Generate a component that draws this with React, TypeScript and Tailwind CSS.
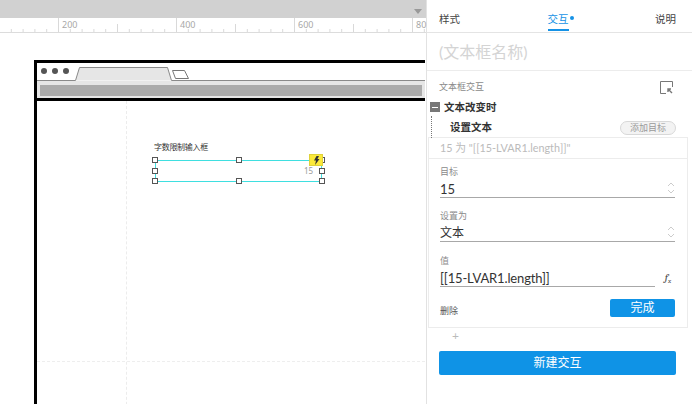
import React from "react";

const font = { fontFamily: '"Lato", "Noto Sans CJK SC", sans-serif' };

function Ruler() {
  return (
    <div className="relative h-[15px] border-b border-[#dcdcdc] bg-white">
      <svg className="absolute left-0 top-0" width="426" height="15">
        {Array.from({ length: 40 }, (_, i) => {
          const n = i - 5;
          const x = 58.5 + n * 11.8;
          const y1 = (n + 100) % 10 === 0 ? 0 : (n + 100) % 5 === 0 ? 6 : 11;
          return <line key={i} x1={x} x2={x} y1={y1} y2={14} stroke="#d9d9d9" />;
        })}
      </svg>
      {[
        [62, "200"],
        [180, "400"],
        [298, "600"],
        [416, "80"],
      ].map(([x, t]) => (
        <span key={t} className="absolute top-[0px] text-[9px] leading-[14px] text-[#a8a8a8]" style={{ left: x as number }}>
          {t}
        </span>
      ))}
    </div>
  );
}

function Handle({ x, y }: { x: number; y: number }) {
  return <div className="absolute h-[6px] w-[6px] border border-[#555] bg-white" style={{ left: x, top: y }} />;
}

function Canvas() {
  return (
    <div className="flex w-[426px] flex-col">
      <div className="relative h-[18px] bg-[#d1d1d1]">
        <div className="absolute left-[414px] top-[9px] h-0 w-0 border-x-[4px] border-t-[5px] border-x-transparent border-t-[#999]" />
      </div>
      <Ruler />
      <div className="relative flex-1 overflow-hidden bg-white">
        <div className="absolute left-[34px] top-[27px] h-[400px] w-[391px] border-l-[3px] border-t-[3px] border-black">
          <div className="relative h-[38px] border-b-[3px] border-black bg-white">
            <div className="flex gap-[5px] pl-[4px] pt-[5px]">
              <i className="block h-[6px] w-[6px] rounded-full bg-[#555]" />
              <i className="block h-[6px] w-[6px] rounded-full bg-[#555]" />
              <i className="block h-[6px] w-[6px] rounded-full bg-[#555]" />
            </div>
            <svg className="absolute left-0 top-0" width="388" height="22">
              <path d="M0 17.5H38.5L42.5 4.5H130.5L134.5 17.5H388" fill="#e6e6e6" stroke="#8a8a8a" />
              <path d="M135.5 7.5H147.5L151.5 15.5H138.5Z" fill="#fff" stroke="#777" />
            </svg>
            <div className="absolute inset-x-0 top-[18px] h-[17px] bg-[#e6e6e6] px-[3px] pt-[4px]">
              <div className="h-[11px] bg-[#ababab]" />
            </div>
          </div>
          <div className="absolute bottom-0 left-[89px] top-[38px] border-l border-dashed border-[#ececec]" />
          <div className="absolute left-0 right-0 top-[298px] border-t border-dashed border-[#eeeeee]" />
        </div>

        <div className="absolute left-[154px] top-[108px] text-[8px] leading-[12px] tracking-[-0.3px] text-[#333]" style={font}>字数限制输入框</div>
        <div className="absolute left-[155px] top-[127px] h-[22px] w-[167px] border border-[#3fdfe0]" />
        <Handle x={152} y={124} />
        <Handle x={236} y={124} />
        <Handle x={319} y={124} />
        <Handle x={152} y={135} />
        <Handle x={319} y={135} />
        <Handle x={152} y={145} />
        <Handle x={236} y={145} />
        <Handle x={319} y={145} />
        <span className="absolute left-[304px] top-[133px] text-[8px] leading-[10px] text-[#999]">15</span>
        <div className="absolute left-[309px] top-[121px] flex h-[12px] w-[14px] items-center justify-center border border-[#dfd23a] bg-[#fbe93a]">
          <svg width="7" height="9" viewBox="0 0 7 9"><path d="M3.5 0H6L4.5 3H6.5L2 9L3 4.5H1Z" fill="#333" /></svg>
        </div>
      </div>
    </div>
  );
}

function Field({ label, value, top, icon, size }: { label: string; value: string; top: string; icon?: boolean; size: string }) {
  return (
    <div className={top}>
      <div className="text-[9px] leading-[14px] text-[#8a8a8a]">{label}</div>
      <div className={`relative mt-[1px] flex h-[18px] items-center border-b border-[#a8a8a8] leading-[18px] text-[#333] ${size}`}>
        {value}
        {icon && (
          <svg className="absolute right-0 top-[2px]" width="8" height="12" viewBox="0 0 8 12" fill="none" stroke="#cccccc" strokeWidth="1">
            <path d="M1 4L4 1L7 4M1 8L4 11L7 8" />
          </svg>
        )}
      </div>
    </div>
  );
}

function Panel() {
  return (
    <div className="flex w-[266px] flex-col border-l border-[#e2e2e2] bg-white" style={font}>
      <div className="flex h-[33px] justify-between border-b border-[#e4e4e4] pl-[12px] pr-[16px] text-[10.5px] text-[#444]">
        <span className="pt-[12px] leading-[14px]">样式</span>
        <div className="relative ml-[16px] w-[36px] pt-[12px] leading-[14px] text-[#1592e6]">
          交互<span className="absolute left-[22px] top-[16px] h-[4px] w-[4px] rounded-full bg-[#1592e6]" />
          <span className="absolute bottom-[1px] left-0 h-[2px] w-[21px] bg-[#1592e6]" />
        </div>
        <span className="pt-[12px] leading-[14px]">说明</span>
      </div>
      <div className="h-[38px] border-b border-[#ececec] pl-[12px] pt-[9px] text-[16px] leading-[20px] text-[#d4d4d4]">(文本框名称)</div>
      <div className="flex items-center justify-between pl-[12px] pr-[19px] pt-[9px] text-[9px] leading-[14px] text-[#8a8a8a]">
        文本框交互
        <svg width="13" height="13" viewBox="0 0 13 13" fill="none" stroke="#777">
          <path d="M12.5 6V.5H.5V12.5H6" />
          <path d="M12 12L8 8M8 11V8H11" strokeWidth="1.4" />
        </svg>
      </div>
      <div className="mt-[5px] flex items-center pl-[3px] text-[10.5px] font-bold leading-[16px] text-[#333]">
        <span className="mr-[4px] flex h-[10px] w-[10px] items-center justify-center bg-[#777]"><i className="block h-[1px] w-[6px] bg-white" /></span>
        文本改变时
      </div>
      <div className="relative mt-[3px] flex h-[19px] items-center justify-between pl-[23px] pr-[16px] text-[10.5px] font-bold text-[#333]">
        <div className="absolute left-[4px] top-[-2px] h-[22px] border-l border-dotted border-[#777]" />
        设置文本
        <span className="flex h-[14px] w-[56px] items-center justify-center rounded-full border border-[#d8d8d8] bg-[#f3f3f3] text-[9px] font-normal text-[#999]">添加目标</span>
      </div>
      <div className="ml-[1px] mr-[4px] h-[191px] border border-[#ececec]">
        <div className="h-[21px] border-b border-[#ececec] pl-[11px] text-[10.8px] leading-[20px] text-[#bbb]">15 为 "[[15-LVAR1.length]]"</div>
        <div className="pl-[11px] pr-[12px]">
          <Field label="目标" value="15" top="mt-[6px]" size="text-[13px]" icon />
          <Field label="设置为" value="文本" top="mt-[11px]" size="text-[12px]" icon />
          <div className="relative pr-[20px]">
            <Field label="值" value="[[15-LVAR1.length]]" top="mt-[12px]" size="text-[13px] tracking-[-0.15px]" />
            <span className="absolute bottom-[2px] right-[4px] font-serif text-[11px] italic leading-[14px] text-[#444]">f<sub className="text-[7px]">x</sub></span>
          </div>
          <div className="mt-[12px] flex items-start justify-between">
            <span className="mt-[5px] text-[9px] leading-[14px] text-[#555]">删除</span>
            <span className="flex h-[18px] w-[65px] items-center justify-center rounded-[2px] bg-[#0f93e6] text-[12px] text-white">完成</span>
          </div>
        </div>
      </div>
      <div className="h-[23px] pl-[25px] text-[12px] leading-[16px] text-[#bbb]">+</div>
      <div className="ml-[12px] mr-[16px] flex h-[24px] items-center justify-center rounded-[2px] bg-[#0f93e6] text-[12px] text-white">新建交互</div>
    </div>
  );
}

export default function App() {
  return (
    <div className="flex h-[404px] w-[692px] overflow-hidden bg-white">
      <Canvas />
      <Panel />
    </div>
  );
}
